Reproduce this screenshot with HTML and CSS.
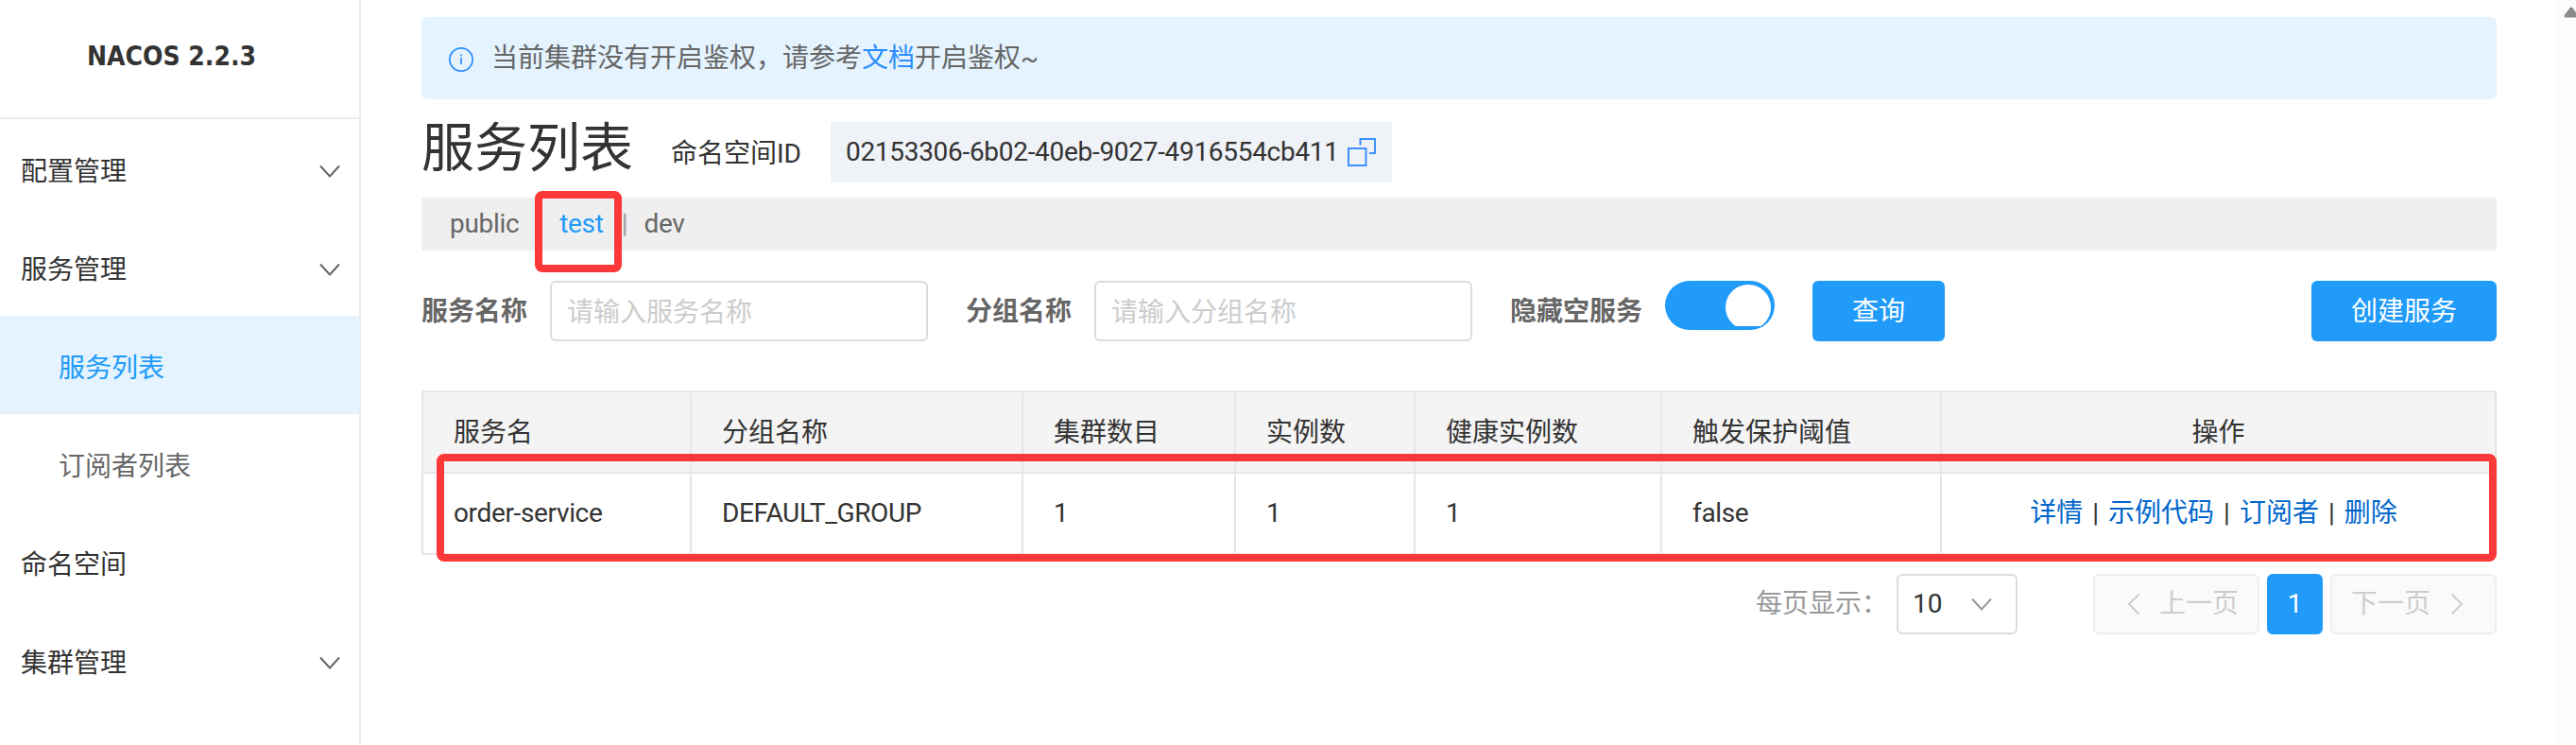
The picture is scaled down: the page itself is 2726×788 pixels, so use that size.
FILE: index.html
```html
<!DOCTYPE html>
<html lang="zh-CN">
  <head>
    <meta charset="UTF-8" />
    <meta name="viewport" content="width=device-width, initial-scale=1.0" />
    <title>Nacos</title>
    <link rel="stylesheet" href="styles.css">
  </head>
  <body>
    <div class="layout">
      <aside class="sidebar">
        <h1 class="logo">NACOS 2.2.3</h1>
        <ul class="nav">
          <li class="nav-item">
            <span>配置管理</span>
            <svg class="caret" viewBox="0 0 22 14"><path d="M1 1.5 L11 12.5 L21 1.5" /></svg>
          </li>
          <li class="nav-item">
            <span>服务管理</span>
            <svg class="caret" viewBox="0 0 22 14"><path d="M1 1.5 L11 12.5 L21 1.5" /></svg>
          </li>
          <li class="nav-item sub active">服务列表</li>
          <li class="nav-item sub">订阅者列表</li>
          <li class="nav-item">命名空间</li>
          <li class="nav-item">
            <span>集群管理</span>
            <svg class="caret" viewBox="0 0 22 14"><path d="M1 1.5 L11 12.5 L21 1.5" /></svg>
          </li>
        </ul>
      </aside>

      <main class="main">
        <div class="notice">
          <svg class="info-icon" viewBox="0 0 26 26">
            <circle cx="13" cy="13" r="12.1" />
            <path d="M13 11 V18 M13 7.6 V9.4" />
          </svg>
          <p>当前集群没有开启鉴权，请参考<a class="doc-link">文档</a>开启鉴权~</p>
        </div>

        <div class="title-row">
          <h2 class="title">服务列表</h2>
          <span class="ns-label">命名空间ID</span>
          <div class="ns-id">
            <span>02153306-6b02-40eb-9027-4916554cb411</span>
            <svg class="copy-icon" viewBox="0 0 30 30">
              <path d="M1 11 H19.5 V29 H1 Z M13.5 7.5 V1 H29 V16 H23" />
            </svg>
          </div>
        </div>

        <div class="namespaces">
          <span class="ns">public</span>
          <span class="bar">|</span>
          <span class="ns current">test<i class="mark mark-ns"></i></span>
          <span class="bar">|</span>
          <span class="ns">dev</span>
        </div>

        <form class="search">
          <label class="label" for="serviceName">服务名称</label>
          <input class="input" id="serviceName" type="text" placeholder="请输入服务名称" />
          <label class="label" for="groupName">分组名称</label>
          <input class="input" id="groupName" type="text" placeholder="请输入分组名称" />
          <span class="label">隐藏空服务</span>
          <span class="switch"><span class="knob"></span></span>
          <button type="button" class="button query">查询</button>
          <button type="button" class="button create">创建服务</button>
        </form>

        <div class="table-wrap">
          <table class="table">
            <colgroup>
              <col class="col-name" />
              <col class="col-group" />
              <col class="col-cluster" />
              <col class="col-instance" />
              <col class="col-healthy" />
              <col class="col-threshold" />
              <col />
            </colgroup>
            <thead>
              <tr>
                <th>服务名</th>
                <th>分组名称</th>
                <th>集群数目</th>
                <th>实例数</th>
                <th>健康实例数</th>
                <th>触发保护阈值</th>
                <th class="ops">操作</th>
              </tr>
            </thead>
            <tbody>
              <tr>
                <td>order-service</td>
                <td>DEFAULT_GROUP</td>
                <td>1</td>
                <td>1</td>
                <td>1</td>
                <td>false</td>
                <td class="ops">
                  <div class="op-list">
                    <a>详情</a><span>|</span><a>示例代码</a><span>|</span><a>订阅者</a><span>|</span><a>删除</a>
                  </div>
                </td>
              </tr>
            </tbody>
          </table>
          <i class="mark mark-row"></i>
        </div>

        <div class="pagination">
          <span class="size-label">每页显示：</span>
          <div class="size-select">
            <span>10</span>
            <svg class="caret" viewBox="0 0 22 14"><path d="M1 1.5 L11 12.5 L21 1.5" /></svg>
          </div>
          <button type="button" class="page prev" disabled>
            <svg class="arrow" viewBox="0 0 14 24"><path d="M12.5 1.5 L2 12 L12.5 22.5" /></svg>
            <span>上一页</span>
          </button>
          <button type="button" class="page number">1</button>
          <button type="button" class="page next" disabled>
            <span>下一页</span>
            <svg class="arrow" viewBox="0 0 14 24"><path d="M1.5 1.5 L12 12 L1.5 22.5" /></svg>
          </button>
        </div>
      </main>

      <div class="scrollbar">
        <svg class="scroll-up" viewBox="0 0 16 12"><path d="M8 2 L14 10 H2 Z" /></svg>
      </div>
    </div>
  </body>
</html>
```
FILE: styles.css
```css
* {
  box-sizing: border-box;
}
body {
  margin: 0;
  font-family: Roboto, "Noto Sans CJK SC", sans-serif;
  font-size: 28px;
  line-height: 40px;
  color: #333;
  background-color: #fff;
  overflow: hidden;
}
svg {
  flex: none;
  fill: none;
}
.layout {
  display: flex;
  height: 788px;
}

/* Sidebar */
.sidebar {
  flex: none;
  width: 382px;
  border-right: 2px solid #ebebeb;
}
.logo {
  height: 126px;
  margin: 0;
  padding-right: 17px;
  border-bottom: 2px solid #ebebeb;
  font-family: "DejaVu Sans Condensed", "DejaVu Sans", sans-serif;
  font-size: 28px;
  font-stretch: semi-condensed;
  line-height: 120px;
  text-align: center;
}
.nav {
  margin: 0;
  padding: 0;
  list-style: none;
}
.nav-item {
  display: flex;
  justify-content: space-between;
  align-items: center;
  height: 104px;
  padding: 8px 20px 0 22px;
}
.nav-item.sub {
  padding-left: 62px;
  color: #666;
}
.nav-item.active {
  color: #209bfa;
  background-color: #e4f3fe;
}
.caret {
  width: 22px;
  height: 14px;
  stroke: #666;
  stroke-width: 2;
}
.nav-item .caret {
  margin-bottom: 2px;
}

/* Main column */
.main {
  flex: 1;
  padding: 18px 64px 0;
}
.notice {
  display: flex;
  align-items: center;
  height: 87px;
  padding: 0 29px;
  border-radius: 6px;
  color: #666;
  background-color: #e4f3fe;
}
.notice p {
  margin: 0 0 0 19px;
}
.info-icon {
  width: 26px;
  height: 26px;
  margin-top: 3px;
  stroke: #298dff;
  stroke-width: 1.7;
}
.doc-link {
  color: #298dff;
}
.title-row {
  display: flex;
  align-items: center;
  height: 64px;
  margin-top: 24px;
}
.title {
  margin: 0 40px 8px 0;
  font-size: 56px;
  font-weight: 400;
  line-height: 64px;
}
.ns-label {
  margin: 3px 31px 0 0;
}
.ns-id {
  display: flex;
  align-items: center;
  width: 594px;
  height: 64px;
  padding: 0 17px 0 16px;
  letter-spacing: -0.3px;
  white-space: nowrap;
  background-color: #eff2f7;
}
.copy-icon {
  width: 30px;
  height: 30px;
  margin-left: auto;
  stroke: #3c91ff;
  stroke-width: 2;
}
.namespaces {
  display: flex;
  align-items: center;
  height: 56px;
  margin-top: 16px;
  padding: 0 30px;
  background-color: #efefef;
}
.ns {
  color: #666;
  letter-spacing: -0.3px;
}
.ns.current {
  position: relative;
  color: #209bfa;
}
.bar {
  margin: 0 17px 0 19px;
  color: #999;
}

/* Red highlight frames */
.mark {
  position: absolute;
  border: 8px solid #fc3838;
  border-radius: 8px;
}
.mark-ns {
  top: -15px;
  left: -26px;
  width: 92px;
  height: 86px;
}
.mark-row {
  top: 67px;
  left: 16px;
  right: 0;
  height: 114px;
}

/* Search form */
.search {
  display: flex;
  align-items: center;
  margin-top: 32px;
}
.label {
  padding-top: 2px;
  font-weight: 700;
  color: #666;
}
.input {
  width: 400px;
  height: 64px;
  margin: 0 40px 0 24px;
  padding: 2px 16px 0;
  border: 2px solid #dcdcdc;
  border-radius: 6px;
  font: inherit;
  outline: none;
}
.input::placeholder {
  color: #ccc;
}
.switch {
  align-self: flex-start;
  width: 116px;
  height: 52px;
  margin-left: 24px;
  padding: 4px;
  border-radius: 26px;
  background-color: #209bfa;
}
.knob {
  display: block;
  width: 48px;
  height: 48px;
  margin-left: auto;
  border-radius: 50%;
  background-color: #fff;
  clip-path: inset(0 0 4px 0);
}
.button {
  height: 64px;
  padding: 2px 0 0;
  border: none;
  border-radius: 6px;
  font: inherit;
  color: #fff;
  background-color: #209bfa;
}
.query {
  width: 140px;
  margin-left: 40px;
}
.create {
  width: 196px;
  margin-left: auto;
}

/* Service table */
.table-wrap {
  position: relative;
  margin-top: 52px;
}
.table {
  width: 100%;
  border: 2px solid #e6e6e6;
  border-right: none;
  border-bottom: none;
  border-spacing: 0;
  table-layout: fixed;
}
.table th,
.table td {
  height: 86px;
  padding: 0 32px;
  border-right: 2px solid #e6e6e6;
  border-bottom: 2px solid #e6e6e6;
  font-weight: 400;
  text-align: left;
}
.table th {
  padding-top: 2px;
  background-color: #f4f4f4;
}
.table td {
  letter-spacing: -0.35px;
}
.table .ops {
  letter-spacing: 0;
  text-align: center;
}
.col-name {
  width: 284px;
}
.col-group {
  width: 351px;
}
.col-cluster {
  width: 225px;
}
.col-instance {
  width: 190px;
}
.col-healthy {
  width: 261px;
}
.col-threshold {
  width: 296px;
}
.op-list {
  display: flex;
  justify-content: center;
}
.op-list a {
  margin-right: 10px;
  color: #06c;
}
.op-list span {
  margin-right: 10px;
}

/* Pagination */
.pagination {
  display: flex;
  justify-content: flex-end;
  align-items: center;
  margin-top: 20px;
}
.size-label {
  margin-right: 9px;
  color: #999;
}
.size-select {
  display: flex;
  justify-content: space-between;
  align-items: center;
  width: 128px;
  height: 64px;
  margin-right: 80px;
  padding: 0 25px 0 15px;
  border: 2px solid #dcdcdc;
  border-radius: 6px;
}
.size-select .caret {
  stroke: #999;
}
.page {
  display: flex;
  justify-content: space-between;
  align-items: center;
  width: 176px;
  height: 64px;
  padding: 0;
  border: 2px solid #eee;
  border-radius: 6px;
  font: inherit;
  color: #ccc;
  background-color: #fafafa;
}
.prev {
  padding: 0 20px 0 34px;
}
.next {
  padding: 0 33px 0 20px;
}
.number {
  justify-content: center;
  width: 59px;
  margin: 0 8px;
  border-color: #209bfa;
  color: #fff;
  background-color: #209bfa;
}
.arrow {
  width: 14px;
  height: 24px;
  stroke: #ccc;
  stroke-width: 2;
}

/* Scrollbar track */
.scrollbar {
  flex: none;
  width: 20px;
  padding: 7px 0 0 7px;
  background-color: #fcfcfc;
  overflow: hidden;
}
.scroll-up {
  display: block;
  width: 16px;
  height: 12px;
  fill: #8b8b8b;
  stroke: #8b8b8b;
  stroke-width: 3;
  stroke-linejoin: round;
}
```
